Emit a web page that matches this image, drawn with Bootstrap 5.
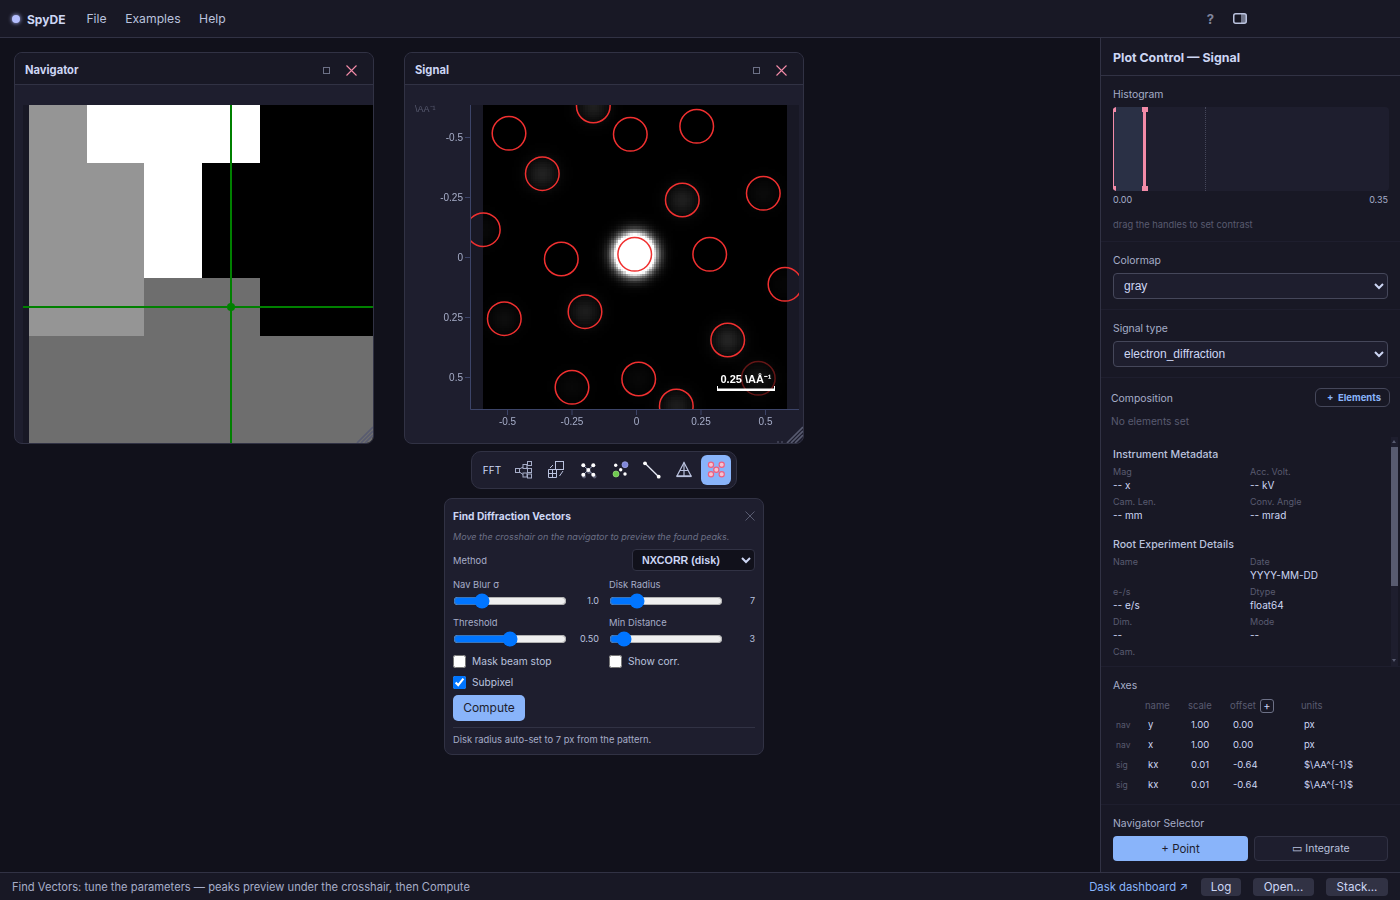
<!DOCTYPE html>
<html lang="en">
<head>
  <meta charset="UTF-8" />
  <meta name="viewport" content="width=device-width, initial-scale=1.0"/>
  <title>SpyDE</title>
  <link href="https://cdn.jsdelivr.net/npm/bootstrap@5.3.3/dist/css/bootstrap.min.css" rel="stylesheet">
  <style>
    body { background: #11111b; color: #cdd6f4; font-family: Inter, "Liberation Sans", sans-serif; font-size: 12px; overflow: hidden; }
    .top-bar { height: 38px; flex: none; background: #181825; border-bottom: 1px solid #313244; padding: 2px 12px 0; }
    .brand-dot { width: 8px; height: 8px; border-radius: 50%; background: #b4befe; box-shadow: 0 0 4px #b4befe; margin-right: 7px; margin-top: -2px; }
    .brand { font-weight: 700; font-size: 12px; color: #cdd6f4; margin-right: 21px; }
    .menu-item { font-size: 12.2px; color: #bac2de; margin-right: 18.5px; }
    .top-right { margin-right: 141px; gap: 19px; color: #7f849c; font-weight: 700; font-size: 13px; }
    .top-right svg { margin-top: -2px; }
    .work-area { min-height: 0; }
    .desktop { background: #11111b; }
    .float-win { position: absolute; top: 14px; height: 392px; background: #1e1e2e; border: 1px solid #313244; border-radius: 8px; overflow: hidden; }
    .win-nav { left: 14px; width: 360px; }
    .win-sig { left: 404px; width: 400px; }
    .win-head { height: 32px; background: #181825; border-bottom: 1px solid #313244; padding: 3px 16px 0 10px; font-size: 11.2px; font-weight: 700; }
    .win-tools { gap: 16px; }
    .win-body { position: relative; height: 358px; }
    .win-body svg { position: absolute; left: 0; top: 0; }
    .sig-canvas { position: absolute; left: 78px; top: 20px; width: 304px; height: 304px; image-rendering: pixelated; }
    .tick-text { font-size: 10px; fill: #a6adc8; font-family: "Liberation Sans", sans-serif; }
    .tool-strip { position: absolute; left: 471px; top: 413px; padding: 3px 5px; gap: 2px; background: #1e1e2e; border: 1px solid #313244; border-radius: 10px; }
    .tool-btn { width: 30px; height: 30px; border-radius: 6px; font-size: 10px; color: #cdd6f4; }
    .tool-btn.is-on { background: #89b4fa; }
    .peak-pop { position: absolute; left: 444px; top: 460px; width: 320px; padding: 9px 8px 7px; background: #1e1e2e; border: 1px solid #313244; border-radius: 8px; }
    .pop-title { line-height: 16px; font-size: 10.2px; font-weight: 700; }
    .pop-hint { margin-top: 6px; line-height: 14px; font-size: 9.05px; font-style: italic; color: #6c7086; }
    .pop-method { margin-top: 5px; }
    .pop-label { line-height: 16px; height: 14px; font-size: 9.4px; color: #a6adc8; }
    .pop-grid { display: grid; grid-template-columns: 146px 146px; column-gap: 10px; row-gap: 6px; margin-top: 6px; }
    .pop-grid input[type=range] { width: 114px; height: 16px; margin: 0; display: block; }
    .pop-slider { margin-top: 2px; }
    .pop-val { font-size: 9px; color: #bac2de; }
    .pop-check { line-height: 14px; font-size: 10.2px; color: #bac2de; gap: 6px; height: 14px; margin-top: 1px; }
    .pop-check input { margin: 0; width: 13px; height: 13px; }
    .native-select.form-select { appearance: auto; -webkit-appearance: auto; color-scheme: dark; background-image: none; font-family: "Liberation Sans", sans-serif; box-shadow: none; }
    .pop-select.form-select { width: 123px; height: 22px; padding: 0 0 0 5px; font-size: 10.7px; font-weight: 700; background-color: #11111b; color: #cdd6f4; border: 1px solid #313244; border-radius: 4px; }
    .compute-btn { width: 72px; height: 26px; margin-top: 6px; padding: 0; background: #89b4fa; color: #1e1e2e; font-size: 12px; border: none; border-radius: 5px; }
    .pop-note { margin-top: 6px; padding-top: 5px; border-top: 1px solid #313244; line-height: 14px; font-size: 9.4px; color: #a6adc8; }
    .side-panel { width: 300px; flex: none; background: #181825; border-left: 1px solid #313244; }
    .side-panel > div { flex: none; }
    .panel-title { height: 38px; padding: 3px 12px 0; font-size: 12.4px; font-weight: 700; border-bottom: 1px solid #313244; }
    .panel-sec { padding: 10px 12px; border-bottom: 1px solid #1e1e2e; }
    .hist-sec { padding-bottom: 9px; }
    .sec-label { line-height: 18px; height: 16px; font-size: 10.4px; color: #a6adc8; }
    .hist-box { position: relative; height: 84px; margin: 5px -1px 0 0; background: #1e1e2e; border-radius: 4px; overflow: hidden; }
    .hist-range { position: absolute; left: 1px; top: 0; bottom: 0; width: 31px; background: #2a3045; }
    .hist-line { position: absolute; top: 0; bottom: 0; background: #f38ba8; }
    .hist-cap { position: absolute; width: 6px; height: 5px; background: #f38ba8; }
    .hist-mid { position: absolute; left: 92px; top: 0; bottom: 0; border-left: 1px dotted #45475a; }
    .hist-scale { margin-top: 2px; line-height: 14px; font-size: 9px; color: #a6adc8; }
    .hist-hint { margin-top: 11px; line-height: 14px; font-size: 9.3px; color: #585b70; }
    .panel-select.form-select { height: 26px; margin-top: 5px; padding: 0 0 0 6px; font-size: 12px; background-color: #1e1e2e; color: #cdd6f4; border: 1px solid #45475a; border-radius: 4px; }
    .comp-sec { padding: 10px 10px 9px; }
    .add-btn { height: 19px; padding: 0 8px 0 11px; font-size: 9.5px; font-weight: 700; color: #89b4fa; border: 1px solid #45475a; border-radius: 6px; background: transparent; line-height: 17px; }
    .comp-empty { margin-top: 7px; line-height: 14px; font-size: 10.2px; color: #585b70; }
    .meta-scroll { position: relative; height: 229px; margin-right: 2px; padding: 9px 0 0 12px; overflow: hidden; }
    .fake-bar { position: absolute; right: 0; top: 0; bottom: 0; width: 7px; background: #1e1e2e; }
    .fake-thumb { position: absolute; left: 0; right: 0; top: 10px; height: 139px; background: #585b70; }
    .fake-up, .fake-down { position: absolute; left: 1px; border-left: 2.5px solid transparent; border-right: 2.5px solid transparent; }
    .fake-up { top: 3px; border-bottom: 3px solid #585b70; }
    .fake-down { bottom: 4px; border-top: 3px solid #585b70; }
    .meta-head { line-height: 18px; height: 16px; font-size: 10.6px; font-weight: 500; color: #bac2de; }
    .meta-grid { display: grid; grid-template-columns: 137px 1fr; row-gap: 3px; margin-top: 3px; }
    .meta-key { line-height: 13px; height: 13px; font-size: 9px; color: #585b70; }
    .meta-val { line-height: 15px; height: 14px; font-size: 10px; color: #cdd6f4; }
    .axes-top { border-top: 1px solid #1e1e2e; padding-bottom: 9px; }
    .axes-grid { display: grid; grid-template-columns: 32px 43px 42px 71px 1fr; margin-top: 6px; }
    .axes-h { height: 16px; font-size: 9.5px; color: #585b70; }
    .axes-plus { width: 14px; height: 14px; margin-left: 4px; border: 1px solid #6c7086; border-radius: 3px; color: #cdd6f4; font-size: 11px; line-height: 11px; }
    .axes-c { height: 20px; line-height: 20px; padding-left: 3px; font-size: 9.5px; color: #cdd6f4; }
    .axes-tag { font-size: 8.5px; color: #585b70; }
    .sel-row { gap: 6px; margin-top: 5px; }
    .sel-on { width: 135px; height: 25px; padding: 2px 0 0; background: #89b4fa; color: #1e1e2e; font-size: 11.5px; border: none; border-radius: 4px; }
    .sel-off { width: 134px; height: 25px; padding: 0; background: #1e1e2e; color: #bac2de; font-size: 10.5px; border: 1px solid #313244; border-radius: 4px; }
    .status-bar { height: 28px; flex: none; background: #181825; border-top: 1px solid #313244; padding: 1px 12px 0; font-size: 11.15px; color: #a6adc8; }
    .status-link { color: #89b4fa; font-size: 11.3px; margin-right: 1px; }
    .status-btn { height: 18px; padding: 0; background: #313244; color: #cdd6f4; font-size: 11.6px; border: none; border-radius: 4px; line-height: 18px; margin-left: 12px; }
    .btn-log { width: 40px; }
    .btn-open { width: 61px; }
    .btn-stack { width: 62px; }
  </style>
</head>
<body class="d-flex flex-column vh-100">

  <header class="top-bar d-flex align-items-center">
    <span class="brand-dot"></span>
    <span class="brand">SpyDE</span>
    <span class="menu-item">File</span>
    <span class="menu-item">Examples</span>
    <span class="menu-item">Help</span>
    <div class="top-right d-flex align-items-center ms-auto">
      <span>?</span>
      <svg width="14" height="11" viewBox="0 0 14 11"><rect x="0.75" y="0.75" width="12.5" height="9.5" rx="2" fill="none" stroke="#bac2de" stroke-width="1.5"/><rect x="8" y="1" width="5" height="9" fill="#bac2de" opacity="0.55"/></svg>
    </div>
  </header>

  <div class="work-area d-flex flex-grow-1">
    <main class="desktop flex-grow-1 position-relative">

      <section class="float-win win-nav">
        <div class="win-head d-flex align-items-center justify-content-between">
          <span>Navigator</span>
          <div class="win-tools d-flex align-items-center">
            <svg width="7" height="7" viewBox="0 0 7 7"><rect x="0.5" y="0.5" width="6" height="6" fill="none" stroke="#6c7086"/></svg>
            <svg width="11" height="11" viewBox="0 0 11 11"><path d="M0.5 0.5 10.5 10.5M10.5 0.5 0.5 10.5" stroke="#f38ba8" stroke-width="1.1"/></svg>
          </div>
        </div>
        <div class="win-body">
          <svg width="358" height="358" viewBox="15 85 358 358">
            <rect x="23" y="105" width="6" height="338" fill="#181825"/>
            <rect x="29" y="105" width="344" height="338" fill="#000"/>
            <rect x="29" y="105" width="115" height="231" fill="#959595"/>
            <rect x="87" y="105" width="173" height="58" fill="#fff"/>
            <rect x="144" y="163" width="58" height="115" fill="#fff"/>
            <rect x="144" y="278" width="116" height="58" fill="#6e6e6e"/>
            <rect x="29" y="336" width="344" height="107" fill="#6e6e6e"/>
            <path d="M23 307H373M231 105V443" stroke="#008000" stroke-width="2"/>
            <circle cx="231" cy="307" r="4" fill="#008000"/>
            <path d="M357 443 373 427M361 443 373 431M365 443 373 435" stroke="#585b70" stroke-width="1.6"/>
          </svg>
        </div>
      </section>

      <section class="float-win win-sig">
        <div class="win-head d-flex align-items-center justify-content-between">
          <span>Signal</span>
          <div class="win-tools d-flex align-items-center">
            <svg width="7" height="7" viewBox="0 0 7 7"><rect x="0.5" y="0.5" width="6" height="6" fill="none" stroke="#6c7086"/></svg>
            <svg width="11" height="11" viewBox="0 0 11 11"><path d="M0.5 0.5 10.5 10.5M10.5 0.5 0.5 10.5" stroke="#f38ba8" stroke-width="1.1"/></svg>
          </div>
        </div>
        <div class="win-body">
          <canvas id="sigCanvas" class="sig-canvas" width="128" height="128"></canvas>
          <svg id="sigOverlay" width="398" height="358" viewBox="405 85 398 358">
            <defs><clipPath id="plotClip"><rect x="471" y="105" width="328" height="304"/></clipPath></defs>
            <rect x="471" y="105" width="12" height="304" fill="#181825"/>
            <rect x="787" y="105" width="12" height="304" fill="#181825"/>
            <text x="415" y="112" font-size="9" fill="#585b70" font-family="Liberation Sans, sans-serif">\AA⁻¹</text>
            <path d="M470.5 105V409.5H799" fill="none" stroke="#3c4468"/>
            <path d="M465 137.5H471M465 197.5H471M465 257.5H471M465 317.5H471M465 377.5H471M507.5 409V415M572 409V415M636.5 409V415M701 409V415M765.5 409V415" stroke="#3c4468"/>
            <g class="tick-text" text-anchor="end">
              <text x="463" y="141">-0.5</text><text x="463" y="201">-0.25</text><text x="463" y="261">0</text><text x="463" y="321">0.25</text><text x="463" y="381">0.5</text>
            </g>
            <g class="tick-text" text-anchor="middle">
              <text x="507.5" y="425">-0.5</text><text x="572" y="425">-0.25</text><text x="636.5" y="425">0</text><text x="701" y="425">0.25</text><text x="765.5" y="425">0.5</text>
            </g>
            <g id="peakRings" clip-path="url(#plotClip)" fill="none" stroke="#f03030" stroke-width="1.5"></g>
            <text x="746" y="383" text-anchor="middle" font-size="11" font-weight="700" fill="#fff" font-family="Liberation Sans, sans-serif">0.25 \AÅ⁻¹</text>
            <path d="M717 388.5H775V391H717ZM717 386H718V389H717ZM774 386H775V389H774Z" fill="#fff"/>
            <path d="M787 443 803 427M791 443 803 431M795 443 803 435" stroke="#585b70" stroke-width="1.6"/>
            <path d="M777 442H779M781 442H783" stroke="#585b70"/>
          </svg>
        </div>
      </section>

      <div class="tool-strip d-flex align-items-center">
        <div class="tool-btn d-flex align-items-center justify-content-center">FFT</div>
        <div class="tool-btn d-flex align-items-center justify-content-center">
          <svg width="20" height="20" viewBox="514 460 20 20" fill="none" stroke="#a6adc8"><rect x="515.5" y="468.5" width="4" height="4"/><rect x="523" y="464.5" width="4" height="4"/><rect x="527.5" y="461.5" width="4" height="4"/><rect x="527.5" y="468.5" width="4" height="4"/><rect x="523" y="473" width="4" height="4"/><rect x="527.5" y="474" width="4" height="4"/><path d="M519.5 469 523 467M519.5 472 523 474.5M527 466 527.5 465M527 467 527.5 470M527 475 527.5 475.5"/></svg>
        </div>
        <div class="tool-btn d-flex align-items-center justify-content-center">
          <svg width="20" height="20" viewBox="546 460 20 20" fill="none" stroke="#bac2de"><rect x="555.5" y="461.5" width="8" height="8"/><path d="M548.5 469.5H556.5V477.5H548.5ZM548.5 473.5H556.5M552.5 469.5V477.5"/><path d="M550 468 553 465M563 471 559.5 476" stroke-width="1"/></svg>
        </div>
        <div class="tool-btn d-flex align-items-center justify-content-center">
          <svg width="20" height="20" viewBox="579 460 20 20"><g fill="#585b70"><circle cx="585" cy="476.5" r="2"/><circle cx="595.5" cy="476.5" r="2"/><circle cx="590" cy="472" r="2"/></g><path d="M584.3 465.3 594.3 474.7M594.3 465.3 584.3 474.7" stroke="#a6adc8"/><g fill="#fff"><circle cx="584.3" cy="465.3" r="2"/><circle cx="594.3" cy="465.3" r="2"/><circle cx="589.3" cy="470" r="2"/><circle cx="584.3" cy="474.7" r="2"/><circle cx="594.3" cy="474.7" r="2"/></g></svg>
        </div>
        <div class="tool-btn d-flex align-items-center justify-content-center">
          <svg width="20" height="20" viewBox="610 460 20 20"><circle cx="625" cy="464.7" r="3" fill="#8087d8" stroke="#a6adf0" stroke-width="0.7"/><circle cx="616" cy="474" r="3" fill="#6fca50" stroke="#9be07e" stroke-width="0.7"/><g fill="#fff"><circle cx="615.7" cy="465.3" r="1.7"/><circle cx="620.7" cy="469.7" r="1.7"/><circle cx="625" cy="474" r="1.7"/></g></svg>
        </div>
        <div class="tool-btn d-flex align-items-center justify-content-center">
          <svg width="20" height="20" viewBox="642 460 20 20"><path d="M645 463.3 658.7 476.7" stroke="#e6e9f5" stroke-width="1.3"/><circle cx="645" cy="463.3" r="1.9" fill="#fff"/><circle cx="658.7" cy="476.7" r="1.9" fill="#fff"/></svg>
        </div>
        <div class="tool-btn d-flex align-items-center justify-content-center">
          <svg width="20" height="20" viewBox="674 460 20 20" fill="none" stroke="#bac2de" stroke-width="1.2"><path d="M684 462.5 677 476H691Z"/><path d="M684 462.5V476M680 470.5H688"/><path d="M676.5 476.3H691.5" stroke-width="1.6"/></svg>
        </div>
        <div class="tool-btn is-on d-flex align-items-center justify-content-center">
          <svg width="20" height="20" viewBox="706 460 20 20"><g fill="#f5c2d0" stroke="#ee5f80" stroke-width="1.2"><circle cx="711" cy="464.7" r="2.6"/><circle cx="721.7" cy="464.7" r="2.6"/><circle cx="716.3" cy="469.7" r="2.6"/><circle cx="711" cy="474.3" r="2.6"/><circle cx="721.7" cy="474.3" r="2.6"/></g></svg>
        </div>
      </div>

      <div class="peak-pop">
        <div class="d-flex justify-content-between align-items-center">
          <span class="pop-title">Find Diffraction Vectors</span>
          <svg width="10" height="10" viewBox="0 0 10 10"><path d="M0.5 0.5 9.5 9.5M9.5 0.5 0.5 9.5" stroke="#585b70"/></svg>
        </div>
        <div class="pop-hint">Move the crosshair on the navigator to preview the found peaks.</div>
        <div class="pop-method d-flex justify-content-between align-items-center">
          <span class="pop-label">Method</span>
          <select class="form-select native-select pop-select"><option>NXCORR (disk)</option></select>
        </div>
        <div class="pop-grid">
          <div>
            <div class="pop-label">Nav Blur σ</div>
            <div class="pop-slider d-flex justify-content-between align-items-center"><input type="range" min="0" max="4.7" step="0.1" value="1"><span class="pop-val">1.0</span></div>
          </div>
          <div>
            <div class="pop-label">Disk Radius</div>
            <div class="pop-slider d-flex justify-content-between align-items-center"><input type="range" min="1" max="30" value="7"><span class="pop-val">7</span></div>
          </div>
          <div>
            <div class="pop-label">Threshold</div>
            <div class="pop-slider d-flex justify-content-between align-items-center"><input type="range" min="0" max="1" step="0.01" value="0.5"><span class="pop-val">0.50</span></div>
          </div>
          <div>
            <div class="pop-label">Min Distance</div>
            <div class="pop-slider d-flex justify-content-between align-items-center"><input type="range" min="1" max="30" value="3"><span class="pop-val">3</span></div>
          </div>
          <div class="pop-check d-flex align-items-center"><input type="checkbox"><span>Mask beam stop</span></div>
          <div class="pop-check d-flex align-items-center"><input type="checkbox"><span>Show corr.</span></div>
          <div class="pop-check d-flex align-items-center"><input type="checkbox" checked><span>Subpixel</span></div>
        </div>
        <button class="btn compute-btn d-block">Compute</button>
        <div class="pop-note">Disk radius auto-set to 7 px from the pattern.</div>
      </div>
    </main>

    <aside class="side-panel d-flex flex-column">
      <div class="panel-title d-flex align-items-center">Plot Control — Signal</div>

      <div class="panel-sec hist-sec">
        <div class="sec-label">Histogram</div>
        <div class="hist-box">
          <div class="hist-range"></div>
          <div class="hist-mid"></div>
          <div class="hist-line" style="left:0;width:1px"></div>
          <div class="hist-cap" style="left:-3px;top:0"></div>
          <div class="hist-cap" style="left:-3px;bottom:0"></div>
          <div class="hist-line" style="left:30px;width:3px"></div>
          <div class="hist-cap" style="left:29px;top:0"></div>
          <div class="hist-cap" style="left:29px;bottom:0"></div>
        </div>
        <div class="hist-scale d-flex justify-content-between"><span>0.00</span><span>0.35</span></div>
        <div class="hist-hint">drag the handles to set contrast</div>
      </div>

      <div class="panel-sec">
        <div class="sec-label">Colormap</div>
        <select class="form-select native-select panel-select"><option>gray</option></select>
      </div>

      <div class="panel-sec">
        <div class="sec-label">Signal type</div>
        <select class="form-select native-select panel-select"><option>electron_diffraction</option></select>
      </div>

      <div class="comp-sec">
        <div class="d-flex justify-content-between align-items-center">
          <span class="sec-label">Composition</span>
          <button class="btn add-btn">+&nbsp; Elements</button>
        </div>
        <div class="comp-empty">No elements set</div>
      </div>

      <div class="meta-scroll">
        <div class="meta-head">Instrument Metadata</div>
        <div class="meta-grid">
          <div><div class="meta-key">Mag</div><div class="meta-val">-- x</div></div>
          <div><div class="meta-key">Acc. Volt.</div><div class="meta-val">-- kV</div></div>
          <div><div class="meta-key">Cam. Len.</div><div class="meta-val">-- mm</div></div>
          <div><div class="meta-key">Conv. Angle</div><div class="meta-val">-- mrad</div></div>
        </div>
        <div class="meta-head" style="margin-top:14px">Root Experiment Details</div>
        <div class="meta-grid">
          <div><div class="meta-key">Name</div><div class="meta-val"></div></div>
          <div><div class="meta-key">Date</div><div class="meta-val">YYYY-MM-DD</div></div>
          <div><div class="meta-key">e-/s</div><div class="meta-val">-- e/s</div></div>
          <div><div class="meta-key">Dtype</div><div class="meta-val">float64</div></div>
          <div><div class="meta-key">Dim.</div><div class="meta-val">--</div></div>
          <div><div class="meta-key">Mode</div><div class="meta-val">--</div></div>
          <div><div class="meta-key">Cam.</div><div class="meta-val"></div></div>
        </div>
        <div class="fake-bar"><span class="fake-up"></span><span class="fake-thumb"></span><span class="fake-down"></span></div>
      </div>

      <div class="panel-sec axes-top">
        <div class="sec-label">Axes</div>
        <div class="axes-grid">
          <div class="axes-h"></div><div class="axes-h">name</div><div class="axes-h">scale</div>
          <div class="axes-h d-flex align-items-start">offset<span class="axes-plus d-flex align-items-center justify-content-center">+</span></div>
          <div class="axes-h">units</div>

          <div class="axes-c axes-tag">nav</div><div class="axes-c">y</div><div class="axes-c">1.00</div><div class="axes-c">0.00</div><div class="axes-c">px</div>
          <div class="axes-c axes-tag">nav</div><div class="axes-c">x</div><div class="axes-c">1.00</div><div class="axes-c">0.00</div><div class="axes-c">px</div>
          <div class="axes-c axes-tag">sig</div><div class="axes-c">kx</div><div class="axes-c">0.01</div><div class="axes-c">-0.64</div><div class="axes-c">$\AA^{-1}$</div>
          <div class="axes-c axes-tag">sig</div><div class="axes-c">kx</div><div class="axes-c">0.01</div><div class="axes-c">-0.64</div><div class="axes-c">$\AA^{-1}$</div>
        </div>
      </div>

      <div class="panel-sec border-0">
        <div class="sec-label">Navigator Selector</div>
        <div class="sel-row d-flex">
          <button class="btn sel-on">+ Point</button>
          <button class="btn sel-off">▭ Integrate</button>
        </div>
      </div>
    </aside>
  </div>

  <footer class="status-bar d-flex align-items-center">
    <span>Find Vectors: tune the parameters — peaks preview under the crosshair, then Compute</span>
    <span class="status-link ms-auto">Dask dashboard ↗</span>
    <button class="btn status-btn btn-log">Log</button>
    <button class="btn status-btn btn-open">Open...</button>
    <button class="btn status-btn btn-stack">Stack...</button>
  </footer>

  <script src="https://cdn.jsdelivr.net/npm/bootstrap@5.3.3/dist/js/bootstrap.bundle.min.js"></script>
  <script>
    // screen x, screen y, blob brightness
    const peaks = [
      [509, 133.3, 0], [593.3, 106, 0.12], [630.3, 134.3, 0], [696.7, 126.3, 0],
      [542.3, 173.7, 0.13], [682.3, 200, 0.12], [763.3, 193.3, 0.04], [483.3, 229.7, 0.03],
      [561.3, 259, 0], [634.7, 254.3, 6], [709.7, 254.3, 0], [785, 284.3, 0.02],
      [585, 311.7, 0.11], [504.3, 318.7, 0.05], [727.7, 340, 0.14], [758.3, 378.3, 0.07],
      [572, 387.3, 0.03], [638.7, 379, 0.03], [676.3, 406, 0.11]
    ];

    const canvas = document.getElementById("sigCanvas");
    const ctx = canvas.getContext("2d");
    const img = ctx.createImageData(128, 128);
    const px = 304 / 128;
    for (let y = 0; y < 128; y++) {
      for (let x = 0; x < 128; x++) {
        let v = 0;
        peaks.forEach(p => {
          if (!p[2]) return;
          const dx = 483 + (x + 0.5) * px - p[0];
          const dy = 105 + (y + 0.5) * px - p[1];
          v += p[2] * Math.exp(-(dx * dx + dy * dy) / (2 * 110));
        });
        const c = Math.min(255, Math.round(v * 255));
        const i = (y * 128 + x) * 4;
        img.data[i] = img.data[i + 1] = img.data[i + 2] = c;
        img.data[i + 3] = 255;
      }
    }
    ctx.putImageData(img, 0, 0);

    const rings = document.getElementById("peakRings");
    peaks.forEach(p => {
      const ring = document.createElementNS("http://www.w3.org/2000/svg", "circle");
      ring.setAttribute("cx", p[0]);
      ring.setAttribute("cy", p[1]);
      ring.setAttribute("r", 16.8);
      if (p[0] === 758.3) ring.setAttribute("stroke-opacity", 0.4);
      rings.appendChild(ring);
    });
  </script>
</body>
</html>
